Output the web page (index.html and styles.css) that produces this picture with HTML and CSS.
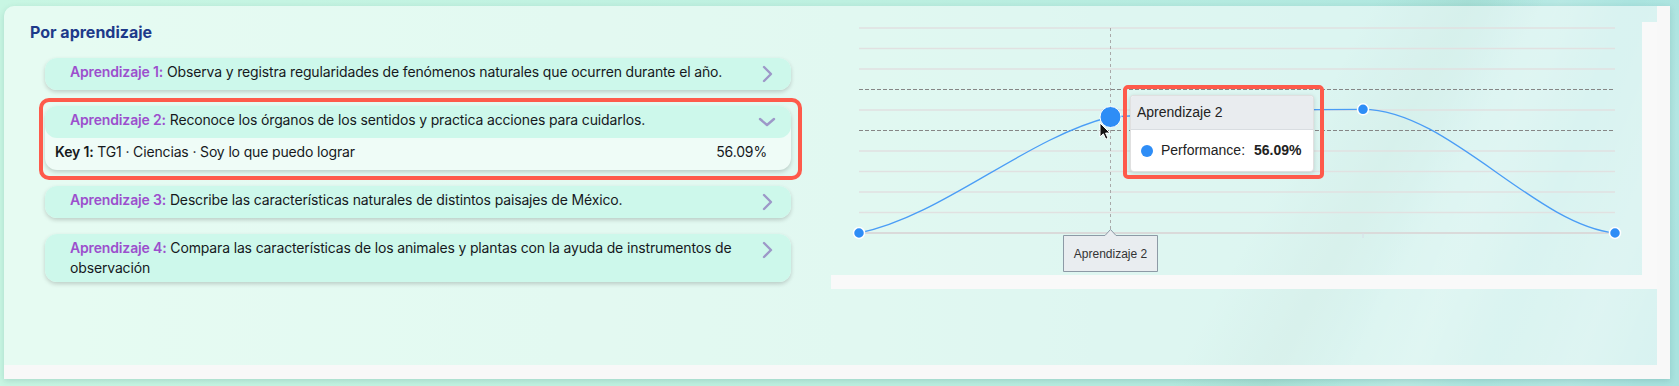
FILE: index.html
```html
<!DOCTYPE html>
<html lang="es">
<head>
    <meta charset="UTF-8">
    <meta name="viewport" content="width=device-width, initial-scale=1.0">
    <title>Por aprendizaje</title>
    <link rel="stylesheet" href="styles.css">
</head>
<body>
    <div class="card">
        <div class="layout">
            <section class="learning">
                <h2 class="section-title">Por aprendizaje</h2>
                <div class="acc-list">
                    <div class="acc-item">
                        <div class="acc-head">
                            <p class="acc-text"><b class="acc-label">Aprendizaje 1:</b> Observa y registra regularidades de fenómenos naturales que ocurren durante el año.</p>
                            <span class="acc-icon"><svg width="24" height="24" viewBox="0 0 24 24"><path d="M9 5l7 7-7 7"/></svg></span>
                        </div>
                    </div>
                    <div class="acc-item open">
                        <div class="acc-head">
                            <p class="acc-text"><b class="acc-label">Aprendizaje 2:</b> Reconoce los órganos de los sentidos y practica acciones para cuidarlos.</p>
                            <span class="acc-icon"><svg width="24" height="24" viewBox="0 0 24 24"><path d="M5 9l7 6 7-6"/></svg></span>
                        </div>
                        <div class="acc-body">
                            <span><b>Key 1:</b> TG1 · Ciencias · Soy lo que puedo lograr</span>
                            <span>56.09%</span>
                        </div>
                        <div class="mark"></div>
                    </div>
                    <div class="acc-item">
                        <div class="acc-head">
                            <p class="acc-text"><b class="acc-label">Aprendizaje 3:</b> Describe las características naturales de distintos paisajes de México.</p>
                            <span class="acc-icon"><svg width="24" height="24" viewBox="0 0 24 24"><path d="M9 5l7 7-7 7"/></svg></span>
                        </div>
                    </div>
                    <div class="acc-item">
                        <div class="acc-head">
                            <p class="acc-text"><b class="acc-label">Aprendizaje 4:</b> Compara las características de los animales y plantas con la ayuda de instrumentos de observación</p>
                            <span class="acc-icon"><svg width="24" height="24" viewBox="0 0 24 24"><path d="M9 5l7 7-7 7"/></svg></span>
                        </div>
                    </div>
                </div>
            </section>

            <section class="chart-panel">
                <svg class="chart" width="811" height="253" viewBox="831 22 811 253">
                    <!-- grid -->
                    <g class="grid">
                        <line x1="859" y1="28" x2="1615" y2="28"/>
                        <line x1="859" y1="48.5" x2="1615" y2="48.5"/>
                        <line x1="859" y1="69" x2="1615" y2="69"/>
                        <line x1="859" y1="110" x2="1615" y2="110"/>
                        <line x1="859" y1="151" x2="1615" y2="151"/>
                        <line x1="859" y1="171.5" x2="1615" y2="171.5"/>
                        <line x1="859" y1="192" x2="1615" y2="192"/>
                        <line x1="859" y1="212.5" x2="1615" y2="212.5"/>
                    </g>
                    <line class="axis" x1="859" y1="233" x2="1615" y2="233"/>
                    <line class="tick" x1="1363" y1="233" x2="1363" y2="238"/>
                    <line class="plot-line" x1="859" y1="89.5" x2="1615" y2="89.5"/>
                    <line class="plot-line" x1="859" y1="130.5" x2="1615" y2="130.5"/>
                    <line class="crosshair" x1="1110.5" y1="28" x2="1110.5" y2="229"/>

                    <path class="series" d="M859 233 C942.7 216 1026.3 137.6 1110 117 C1194 112 1279 109.3 1363 109.3 C1447 109.3 1535 225 1615 233"/>
                    <circle class="point" cx="859" cy="233" r="5.5"/>
                    <circle class="point" cx="1363" cy="109.3" r="5.5"/>
                    <circle class="point" cx="1615" cy="233" r="5.5"/>
                    <circle class="point hover" cx="1110.5" cy="117" r="10.5"/>

                    <path class="axis-tip" d="M1063.5 235.5 H1105 L1110.5 229.5 L1116 235.5 H1157.5 V271.5 H1063.5 Z"/>
                    <text class="axis-tip-text" x="1110.5" y="258" text-anchor="middle">Aprendizaje 2</text>

                    <path class="cursor" d="M1100 123 L1100 137 L1103.3 133.8 L1105.8 139.2 L1108 138.2 L1105.6 133 L1110 133 Z"/>
                </svg>

                <div class="tooltip">
                    <div class="tooltip-head">Aprendizaje 2</div>
                    <div class="tooltip-body">
                        <span class="dot"></span>
                        <span>Performance:</span>
                        <b>56.09%</b>
                    </div>
                </div>
                <div class="mark tooltip-mark"></div>
            </section>
        </div>
    </div>
</body>
</html>
```

FILE: styles.css
```css
body {
    margin: 0;
    padding: 6px 9px 7px 4px;
    height: 386px;
    box-sizing: border-box;
    font-family: 'Inter', 'Liberation Sans', sans-serif;
    color: #16191d;
    background:
        linear-gradient(112deg, transparent 81%, rgba(255, 255, 255, 0.14) 85%, transparent 89%, rgba(255, 255, 255, 0.12) 94%, transparent 98%),
        linear-gradient(118deg, transparent 73%, rgba(110, 170, 150, 0.14) 78%, transparent 82%),
        linear-gradient(90deg, #c8f6e3 0%, #bdf0e0 50%, #a9e3df 100%);
    overflow: hidden;
}
.card {
    height: 373px;
    box-sizing: border-box;
    background: rgba(255, 255, 255, 0.55);
    border-right: 13px solid #f8f8f8;
    border-bottom: 14px solid #f8f8f8;
    border-radius: 10px 0 0 0;
    box-shadow: 0 2px 6px rgba(0, 70, 70, 0.15);
}
.layout {
    display: grid;
    grid-template-columns: 801px 1fr;
    padding: 16px 0 0 26px;
}
.section-title {
    margin: 0 0 16px;
    font-size: 16px;
    line-height: 20px;
    font-weight: 700;
    color: #1e3a8a;
}
.acc-list {
    display: flex;
    flex-direction: column;
    gap: 16px;
    padding: 0 40px 0 15px;
}
.acc-item {
    position: relative;
    border-radius: 12px;
    background: #effcf7;
    box-shadow: 0 2px 4px rgba(0, 0, 0, 0.18);
}
.acc-head {
    display: flex;
    align-items: flex-start;
    gap: 10px;
    padding: 4px 12px 4px 25px;
    background: #cdf8eb;
    border-radius: 12px;
}
.acc-text {
    flex: 1;
    margin: 0;
    font-size: 14px;
    line-height: 20px;
    letter-spacing: -0.15px;
}
.acc-label {
    font-weight: 600;
    color: #9c4fcd;
}
.acc-icon svg {
    display: block;
    fill: none;
    stroke: #9d98c8;
    stroke-width: 2.4;
    stroke-linecap: round;
    stroke-linejoin: round;
}
.acc-body {
    display: flex;
    justify-content: space-between;
    padding: 4px 24px 8px 10px;
    font-size: 14px;
    line-height: 20px;
    letter-spacing: -0.15px;
}
.acc-body b {
    font-weight: 600;
}
.mark {
    position: absolute;
    inset: -8px -11px -10px -6px;
    border: 4px solid #fe5a4b;
    border-radius: 10px;
    pointer-events: none;
}

.chart-panel {
    position: relative;
    height: 253px;
    border-right: 15px solid #f9f9f9;
    border-bottom: 14px solid #f9f9f9;
}
.chart {
    display: block;
    font-family: 'Liberation Sans', sans-serif;
}
.grid line {
    stroke: #e1e1e1;
    stroke-width: 1.6;
}
.axis {
    stroke: #dadada;
    stroke-width: 2;
}
.tick {
    stroke: #d8dde6;
    stroke-width: 1;
}
.plot-line {
    stroke: #868686;
    stroke-width: 1.2;
    stroke-dasharray: 4 2;
}
.crosshair {
    stroke: #a9a9a9;
    stroke-width: 1;
    stroke-dasharray: 3 3;
}
.series {
    fill: none;
    stroke: #4a9df6;
    stroke-width: 1.3;
}
.point {
    fill: #2e8df6;
    stroke: #ffffff;
    stroke-width: 1.5;
}
.point.hover {
    stroke-width: 1;
}
.axis-tip {
    fill: #e9edf0;
    stroke: #8d9aa6;
    stroke-width: 1;
}
.axis-tip-text {
    font-size: 12px;
    fill: #333;
}
.cursor {
    fill: #111;
    stroke: #fff;
    stroke-width: 1;
    stroke-linejoin: round;
}

.tooltip {
    position: absolute;
    left: 299px;
    top: 73px;
    width: 182px;
    background: #fff;
    border: 1px solid rgba(0, 0, 0, 0.12);
    border-radius: 4px;
    box-shadow: 0 1px 4px rgba(0, 0, 0, 0.15);
    font-family: 'Liberation Sans', sans-serif;
    font-size: 14px;
    color: #222;
    overflow: hidden;
}
.tooltip-head {
    padding: 8px 6px;
    line-height: 17px;
    background: #e9ecef;
    border-bottom: 1px solid #d9dde1;
}
.tooltip-body {
    display: flex;
    align-items: center;
    gap: 8px;
    padding: 12px 10px;
    line-height: 17px;
}
.tooltip-body b {
    margin-left: 1px;
}
.dot {
    width: 12px;
    height: 12px;
    border-radius: 50%;
    background: #2e8df6;
}
.tooltip-mark {
    inset: auto;
    left: 292px;
    top: 63px;
    width: 193px;
    height: 86px;
    border-radius: 5px;
}
```
